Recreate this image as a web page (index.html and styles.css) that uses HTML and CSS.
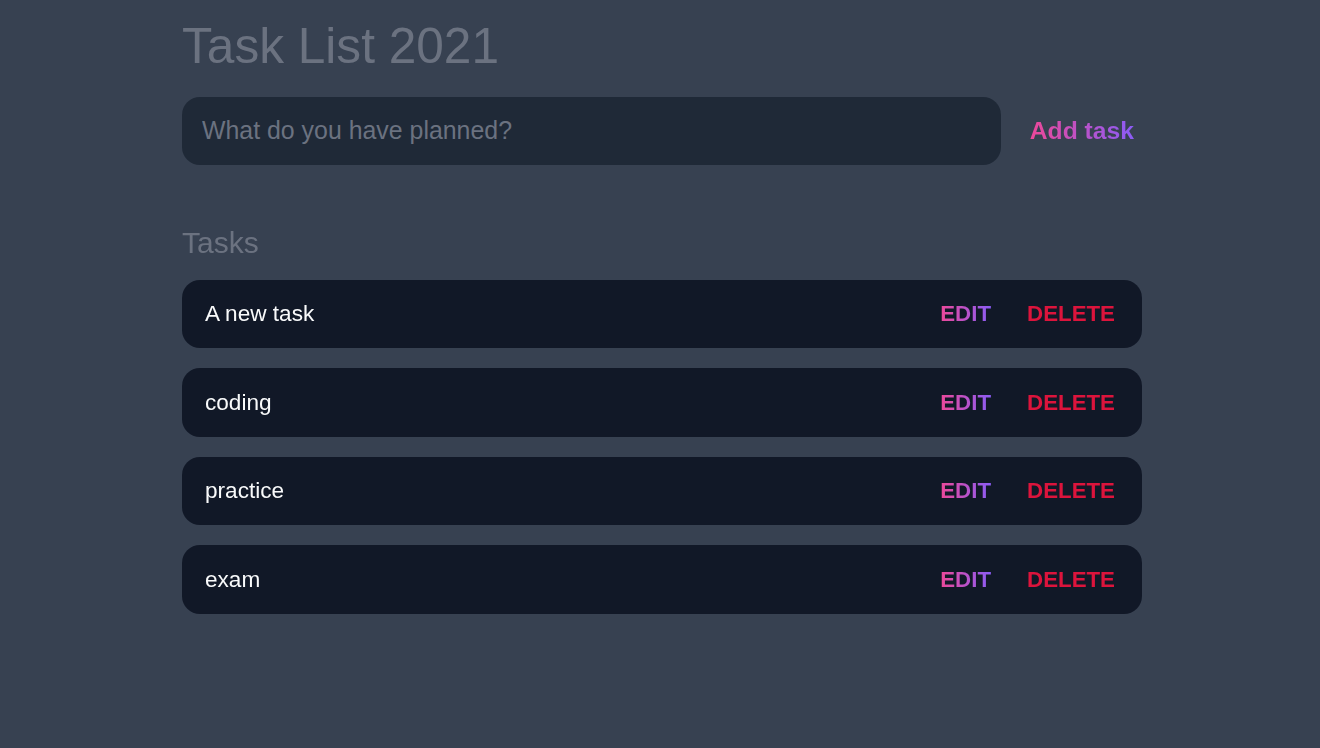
FILE: index.html
```html
<!DOCTYPE html>
<html lang="en">
<head>
<meta charset="utf-8">
<title>Task List 2021</title>
<link rel="stylesheet" href="styles.css">
</head>
<body>
<main class="app">
  <h1 class="title">Task List 2021</h1>
  <form class="new-task" onsubmit="return false">
    <input class="new-task-input" type="text" placeholder="What do you have planned?" autofocus>
    <button class="add-btn" type="submit"><span class="grad">Add task</span></button>
  </form>
  <section class="tasks">
    <h2 class="tasks-title">Tasks</h2>
    <div class="task-list">
      <div class="task">
        <span class="task-text">A new task</span>
        <div class="actions">
          <button class="edit"><span class="grad">EDIT</span></button>
          <button class="delete">DELETE</button>
        </div>
      </div>
      <div class="task">
        <span class="task-text">coding</span>
        <div class="actions">
          <button class="edit"><span class="grad">EDIT</span></button>
          <button class="delete">DELETE</button>
        </div>
      </div>
      <div class="task">
        <span class="task-text">practice</span>
        <div class="actions">
          <button class="edit"><span class="grad">EDIT</span></button>
          <button class="delete">DELETE</button>
        </div>
      </div>
      <div class="task">
        <span class="task-text">exam</span>
        <div class="actions">
          <button class="edit"><span class="grad">EDIT</span></button>
          <button class="delete">DELETE</button>
        </div>
      </div>
    </div>
  </section>
</main>
</body>
</html>
```

FILE: styles.css
```css
* { box-sizing: border-box; }
html, body {
  margin: 0;
  background: #374151;
  font-family: "Liberation Sans", Arial, sans-serif;
  height: 100%;
}
body { padding: 0 0 0 4px; }
.app {
  width: 960px;
  margin: 0 auto;
  padding-top: 22px;
}
.title {
  margin: 0;
  font-size: 49.6px;
  line-height: 1;
  font-weight: 400;
  color: #6b7280;
}
.new-task {
  display: flex;
  align-items: center;
  margin-top: 25.4px;
}
.new-task-input {
  flex: 1;
  height: 68px;
  padding: 0 20px;
  border: none;
  outline: none;
  border-radius: 18px;
  background: #1f2937;
  color: #f3f4f6;
  font-family: inherit;
  font-size: 24.9px;
  caret-color: #f3f4f6;
}
.new-task-input::placeholder { color: #6b7280; }
.add-btn {
  border: none;
  background: none;
  padding: 0 8px 0 29px;
  font-family: inherit;
  font-size: 24.7px;
  font-weight: 700;
  cursor: pointer;
}
.grad {
  background: linear-gradient(to right, #ec4899, #8b5cf6);
  -webkit-background-clip: text;
  background-clip: text;
  color: transparent;
}
.tasks-title {
  margin: 59.6px 0 19.4px;
  font-size: 30px;
  line-height: 36px;
  font-weight: 400;
  color: #6b7280;
}
.task-list {
  display: flex;
  flex-direction: column;
  gap: 20px;
}
.task {
  display: flex;
  align-items: center;
  justify-content: space-between;
  height: 68.5px;
  padding: 0 27px 0 23px;
  background: #111827;
  border-radius: 18px;
}
.task-text {
  color: #f9fafb;
  font-size: 22.6px;
}
.actions {
  display: flex;
  gap: 36px;
}
.actions button {
  border: none;
  background: none;
  padding: 0;
  font-family: inherit;
  font-size: 22.3px;
  font-weight: 700;
  cursor: pointer;
}
.delete { color: #dc143c; }
```
